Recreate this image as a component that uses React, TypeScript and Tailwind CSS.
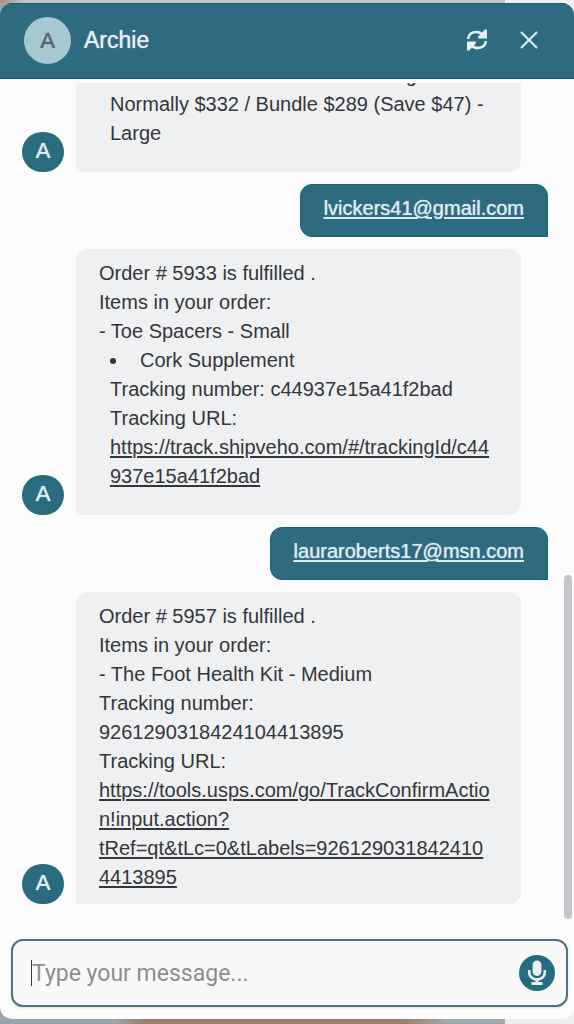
import { PropsWithChildren, useState } from 'react';

function RefreshIcon() {
  return (
    <svg aria-hidden="true" className="h-6 w-6" fill="none" viewBox="0 0 24 24">
      <path d="M3 11C3.600 6.600 7 4 11.200 4c2.800 0 5 1 7 3" stroke="currentColor" strokeWidth="2.600" />
      <path d="M21 13c-.6 4.400-4 7-8.200 7-2.800 0-5-1-7-3" stroke="currentColor" strokeWidth="2.600" />
      <path d="M22 1.600v8.800h-8.800V8.600l6.600-7z" fill="currentColor" />
      <path d="M2 22.400v-8.800h8.800v1.800l-6.600 7z" fill="currentColor" />
    </svg>
  );
}

function CloseIcon() {
  return (
    <svg aria-hidden="true" className="h-6 w-6" fill="none" viewBox="0 0 24 24">
      <path d="M4 4l16 16M20 4L4 20" stroke="currentColor" strokeWidth="2" />
    </svg>
  );
}

function MicIcon() {
  return (
    <svg aria-hidden="true" className="h-7 w-7" viewBox="0 0 28 28">
      <rect fill="currentColor" height="15.500" rx="4.400" width="8.800" x="9.600" y="1.500" />
      <path d="M6.200 11v2.500a7.800 7 0 0 0 15.600 0V11" fill="none" stroke="currentColor" strokeWidth="2.600" />
      <path d="M14 20v4M8.500 24.600h11" fill="none" stroke="currentColor" strokeWidth="3" />
    </svg>
  );
}

function BotMessage({ children }: PropsWithChildren) {
  return (
    <div className="flex items-end gap-3">
      <div className="flex h-10 w-[42px] shrink-0 items-center justify-center rounded-full bg-[#2a6b80] pb-[2px] text-[22px] leading-none text-[#e4eef1] [text-shadow:0_0_1px_currentColor]">
        A
      </div>
      <div className="min-w-0 flex-1 rounded-xl rounded-bl-sm bg-[#eff0f2] px-[23px] pb-3 pt-[10px] wrap-anywhere">
        {children}
      </div>
    </div>
  );
}

function UserMessage({ email }: { email: string }) {
  return (
    <div className="-mr-[27px] self-end rounded-xl rounded-br-none border border-[#16637a] bg-[#2f6b80] px-[23px] pb-[13px] pt-[9px] text-[#dcebef] [text-shadow:0_0_1px_currentColor]">
      <a className="underline decoration-2 underline-offset-2" href={`mailto:${email}`}>
        {email}
      </a>
    </div>
  );
}

export default function App() {
  const [draft, setDraft] = useState('');

  return (
    <div className="flex h-screen flex-col bg-[linear-gradient(to_right,#9aa5aa_0,#9aa5aa_20%,#9c7f6c_25%,#9c7f6c_70%,#a0a9ae_78%,#a0a9ae_88%,#eeeeef_88%)] pb-[5px] font-['Liberation_Sans',Arial,sans-serif] text-xl leading-[29px] text-[#34363a]">
      <div className="h-[3px] shrink-0 bg-[linear-gradient(to_right,#a98f85_0,#c0c3c6_4%,#c0c3c6_88%,#f2f2f3_88%)]" />
      <main className="flex min-h-0 flex-1 flex-col overflow-hidden rounded-xl bg-[#fcfcfc]">
        <header className="flex h-[76px] shrink-0 items-center border-y border-[#0f627a] bg-[#2f6b80] pb-[2px] pl-6 pr-[33px] text-[#e4eff2]">
          <div className="flex h-[47px] w-[47px] items-center justify-center rounded-full bg-[#a6c8d1] text-[22px] text-[#5b666d] [text-shadow:0_0_1px_currentColor]">
            A
          </div>
          <h1 className="ml-[13px] flex-1 text-[23px] [text-shadow:0_0_1px_currentColor]">Archie</h1>
          <button aria-label="Restart chat" type="button">
            <RefreshIcon />
          </button>
          <button aria-label="Close chat" className="ml-7" type="button">
            <CloseIcon />
          </button>
        </header>

        <div className="relative mt-1 flex min-h-0 flex-1 flex-col justify-end gap-3 overflow-hidden pb-[35px] pl-[22px] pr-[53px]">
          <BotMessage>
            <div className="mb-3 pl-[11px]">
              <p className="whitespace-nowrap">The Foot Health Kit Bundle Saving</p>
              <p>Normally $332 / Bundle $289 (Save $47) - Large</p>
            </div>
          </BotMessage>
          <UserMessage email="lvickers41@gmail.com" />
          <BotMessage>
            <p>Order # 5933 is fulfilled .</p>
            <p>Items in your order:</p>
            <p>- Toe Spacers - Small</p>
            <div className="mb-3 pl-[11px]">
              <ul className="list-inside list-disc">
                <li>
                  <span className="ml-[3px]">Cork Supplement</span>
                </li>
              </ul>
              <p>Tracking number: c44937e15a41f2bad</p>
              <p>Tracking URL:</p>
              <a className="underline underline-offset-2" href="https://track.shipveho.com/#/trackingId/c44937e15a41f2bad">
                https://track.shipveho.com/#/trackingId/c44
                <br />
                937e15a41f2bad
              </a>
            </div>
          </BotMessage>
          <UserMessage email="lauraroberts17@msn.com" />
          <BotMessage>
            <p>Order # 5957 is fulfilled .</p>
            <p>Items in your order:</p>
            <p>- The Foot Health Kit - Medium</p>
            <p>Tracking number:</p>
            <p>9261290318424104413895</p>
            <p>Tracking URL:</p>
            <a
              className="underline underline-offset-2"
              href="https://tools.usps.com/go/TrackConfirmAction!input.action?tRef=qt&tLc=0&tLabels=9261290318424104413895"
            >
              https://tools.usps.com/go/TrackConfirmActio
              <br />
              n!input.action?
              <br />
              tRef=qt&amp;tLc=0&amp;tLabels=926129031842410
              <br />
              4413895
            </a>
          </BotMessage>
          <div className="absolute bottom-5 right-[2px] h-[344px] w-2 rounded-full bg-[#c2c6cc]" />
        </div>

        <form
          className="mb-3 ml-[11px] mr-[6px] flex h-[68px] shrink-0 items-center rounded-xl border-2 border-[#4f7480] bg-[#f9f9f9] pl-[18px] pr-[11px] shadow-sm"
          onSubmit={(event) => event.preventDefault()}
        >
          <span aria-hidden="true" className="h-[26px] w-px bg-[#33383b]" />
          <input
            aria-label="Message"
            className="min-w-0 flex-1 bg-transparent font-[Roboto,sans-serif] text-[23px] text-[#34363a] outline-none placeholder:text-[#8b8e92]"
            onChange={(event) => setDraft(event.target.value)}
            placeholder="Type your message..."
            type="text"
            value={draft}
          />
          <button
            aria-label="Record voice message"
            className="flex h-9 w-9 items-center justify-center rounded-full bg-[#256b81] text-[#e9f1f3]"
            type="button"
          >
            <MicIcon />
          </button>
        </form>
      </main>
    </div>
  );
}
